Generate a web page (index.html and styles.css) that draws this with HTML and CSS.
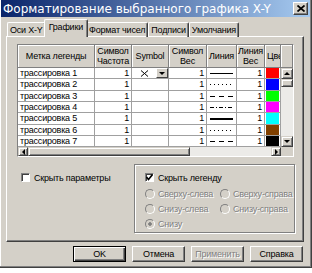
FILE: index.html
```html
<!DOCTYPE html>
<html lang="ru">
<head>
  <meta charset="UTF-8" />
  <title>Форматирование выбранного графика X-Y</title>
  <link rel="stylesheet" href="styles.css">
</head>
<body>
<div class="window">
  <div class="titlebar">
    <span class="title">Форматирование выбранного графика X-Y</span>
    <button class="close" aria-label="Закрыть">
      <svg width="8" height="7" viewBox="0 0 8 7"><path d="M0.5 0.5 L7.5 6.5 M7.5 0.5 L0.5 6.5" stroke="#000" stroke-width="1.7" /></svg>
    </button>
  </div>

  <div class="tabs">
    <div class="tab">Оси X-Y</div>
    <div class="tab active">Графики</div>
    <div class="tab">Формат чисел</div>
    <div class="tab">Подписи</div>
    <div class="tab">Умолчания</div>
  </div>

  <div class="panel">
    <div class="grid">
      <div class="hd">Метка легенды</div>
      <div class="hd">Символ<br>Частота</div>
      <div class="hd">Symbol</div>
      <div class="hd">Символ<br>Вес</div>
      <div class="hd">Линия</div>
      <div class="hd">Линия<br>Вес</div>
      <div class="hd hd-clip">Цвет</div>
      <div class="hd"></div>

      <div class="vscroll">
        <div class="sb-btn"><i class="arr up"></i></div>
        <div class="sb-thumb"></div>
        <div class="sb-track"></div>
        <div class="sb-btn"><i class="arr down"></i></div>
      </div>

      <!-- строка 1 -->
      <div class="c name">трассировка 1</div>
      <div class="c num">1</div>
      <div class="c sym">
        <span class="sym-val"><svg width="9" height="7" viewBox="0 0 9 7"><path d="M1 0.5 L8 6.5 M8 0.5 L1 6.5" stroke="#000" stroke-width="1" /></svg></span>
        <span class="drop"><i class="arr down"></i></span>
      </div>
      <div class="c num">1</div>
      <div class="c line"><i class="ln"></i></div>
      <div class="c num">1</div>
      <div class="c color"><i class="red"></i></div>

      <!-- строка 2 -->
      <div class="c name">трассировка 2</div>
      <div class="c num">1</div>
      <div class="c"></div>
      <div class="c num">1</div>
      <div class="c line"><i class="ln dot"></i></div>
      <div class="c num">1</div>
      <div class="c color"><i class="blue"></i></div>

      <!-- строка 3 -->
      <div class="c name">трассировка 3</div>
      <div class="c num">1</div>
      <div class="c"></div>
      <div class="c num">1</div>
      <div class="c line"><i class="ln dash"></i></div>
      <div class="c num">1</div>
      <div class="c color"><i class="green"></i></div>

      <!-- строка 4 -->
      <div class="c name">трассировка 4</div>
      <div class="c num">1</div>
      <div class="c"></div>
      <div class="c num">1</div>
      <div class="c line"><i class="ln dashdot"></i></div>
      <div class="c num">1</div>
      <div class="c color"><i class="magenta"></i></div>

      <!-- строка 5 -->
      <div class="c name">трассировка 5</div>
      <div class="c num">1</div>
      <div class="c"></div>
      <div class="c num">1</div>
      <div class="c line"><i class="ln thick"></i></div>
      <div class="c num">1</div>
      <div class="c color"><i class="cyan"></i></div>

      <!-- строка 6 -->
      <div class="c name">трассировка 6</div>
      <div class="c num">1</div>
      <div class="c"></div>
      <div class="c num">1</div>
      <div class="c line"><i class="ln dot"></i></div>
      <div class="c num">1</div>
      <div class="c color"><i class="brown"></i></div>

      <!-- строка 7 -->
      <div class="c name">трассировка 7</div>
      <div class="c num">1</div>
      <div class="c"></div>
      <div class="c num">1</div>
      <div class="c line"><i class="ln dash"></i></div>
      <div class="c num">1</div>
      <div class="c color"><i class="black"></i></div>

      <div class="hscroll">
        <div class="sb-btn"><i class="arr left"></i></div>
        <div class="sb-thumb h"></div>
        <div class="sb-track"></div>
        <div class="sb-btn"><i class="arr right"></i></div>
      </div>
      <div class="corner"></div>
    </div>

    <div class="options">
      <div class="opt-left">
        <label class="check"><span class="box"></span>Скрыть параметры</label>
      </div>
      <div class="group">
        <label class="check"><span class="box"><svg width="7" height="7" viewBox="0 0 7 7"><path d="M0.5 3 L2.5 5.5 L6.5 0.5" fill="none" stroke="#000" stroke-width="1.6" /></svg></span>Скрыть легенду</label>
        <div class="radios">
          <span class="radio">Сверху-слева</span>
          <span class="radio">Сверху-справа</span>
          <span class="radio">Снизу-слева</span>
          <span class="radio">Снизу-справа</span>
          <span class="radio on">Снизу</span>
        </div>
      </div>
    </div>
  </div>

  <div class="buttons">
    <button class="btn default">OK</button>
    <button class="btn">Отмена</button>
    <button class="btn" disabled>Применить</button>
    <button class="btn">Справка</button>
  </div>
</div>
</body>
</html>
```

FILE: styles.css
```css
* {
  box-sizing: border-box;
}

body {
  margin: 0;
  background: #fff;
  font-family: "Liberation Sans", Arial, sans-serif;
  font-size: 9px;
  letter-spacing: -0.2px;
  color: #000;
}

.window {
  width: 312px;
  height: 268px;
  padding: 0 2px 0 1px;
  background: #d4d0c8;
  box-shadow: inset -1px -1px #404040, inset -2px -2px #808080, inset 1px 1px #fff;
}

.titlebar {
  height: 17px;
  display: flex;
  align-items: center;
  justify-content: space-between;
  padding: 0 2px 0 2px;
  background: linear-gradient(to right, #0a246a, #a6caf0);
  color: #fff;
  font-family: "DejaVu Sans", sans-serif;
  font-size: 12px;
  letter-spacing: 0;
}

.close {
  width: 15px;
  height: 13px;
  padding: 0;
  display: flex;
  align-items: center;
  justify-content: center;
  background: #d4d0c8;
  border: 1px solid;
  border-color: #fff #404040 #404040 #fff;
  box-shadow: inset -1px -1px #808080;
}

/* вкладки */
.tabs {
  height: 20px;
  display: flex;
  align-items: flex-end;
  padding-left: 6px;
}
.tab {
  height: 15px;
  padding: 0 2px;
  line-height: 14px;
  white-space: nowrap;
  border: 1px solid;
  border-bottom: none;
  border-color: #fff #404040 #404040 #fff;
  border-radius: 2px 2px 0 0;
  box-shadow: inset -1px 0 #808080;
}
.tab.active {
  height: 18px;
  margin: 0 -2px;
  padding: 0 4px;
  position: relative;
  z-index: 1;
  background: #d4d0c8;
  line-height: 15px;
}

.panel {
  width: 298px;
  height: 206px;
  margin-left: 5px;
  margin-top: -1px;
  padding: 7px 0 0 10px;
  border: 1px solid;
  border-color: #fff #404040 #404040 #fff;
  box-shadow: inset -1px -1px #808080;
}

/* таблица */
.grid {
  width: 277px;
  display: grid;
  grid-template-columns: 77px 37px 37px 38px 30px 28px 16px 12px;
  grid-template-rows: 23px 11px 12px 11px 11px 12px 11px 11px 9px;
  border: 1px solid;
  border-color: #808080 #fff #fff #808080;
  background: #fff;
}
.hd {
  display: flex;
  align-items: center;
  justify-content: center;
  text-align: center;
  line-height: 10px;
  background: #d4d0c8;
  border-right: 1px solid #808080;
  border-bottom: 1px solid #808080;
  box-shadow: inset 1px 1px #fff;
  overflow: hidden;
}
.hd-clip {
  justify-content: flex-start;
  padding-left: 2px;
  white-space: nowrap;
}
.c {
  background: #fff;
  border-right: 1px solid #a0a0a0;
  border-bottom: 1px solid #a0a0a0;
  line-height: 10px;
  white-space: nowrap;
  overflow: hidden;
}
.name {
  padding-left: 2px;
}
.num {
  text-align: right;
  padding-right: 2px;
}
.sym {
  display: flex;
}
.sym-val {
  flex: 1;
  display: flex;
  align-items: center;
  justify-content: center;
}
.drop {
  width: 12px;
  display: flex;
  align-items: center;
  justify-content: center;
  background: #d4d0c8;
  border: 1px solid;
  border-color: #fff #404040 #404040 #fff;
}
.line {
  display: flex;
  align-items: center;
}
.ln {
  display: block;
  flex: 1;
  height: 1px;
  margin: 0 3px;
  background: #000;
}
.ln.thick {
  height: 2px;
}
.ln.dot {
  background: repeating-linear-gradient(to right, #000 0 1px, transparent 1px 4px);
}
.ln.dash {
  background: repeating-linear-gradient(to right, #000 0 5px, transparent 5px 9px);
}
.ln.dashdot {
  background: repeating-linear-gradient(to right, #000 0 4px, transparent 4px 6px, #000 6px 7px, transparent 7px 9px);
}
.color {
  padding: 0 1px 0 1px;
}
.color i {
  display: block;
  height: 100%;
}
.red { background: #ff0000; }
.blue { background: #0000ff; }
.green { background: #00ff00; }
.magenta { background: #ff00ff; }
.cyan { background: #00ffff; }
.brown { background: #804000; }
.black { background: #000; }

/* полосы прокрутки */
.vscroll {
  grid-column: 8;
  grid-row: 2 / 9;
  display: flex;
  flex-direction: column;
  background: #ecebe8;
}
.hscroll {
  grid-column: 1 / 8;
  display: flex;
  background: #ecebe8;
}
.corner {
  background: #d4d0c8;
}
.sb-btn,
.sb-thumb {
  flex: none;
  display: flex;
  align-items: center;
  justify-content: center;
  background: #d4d0c8;
  border: 1px solid;
  border-color: #d4d0c8 #404040 #404040 #d4d0c8;
  box-shadow: inset 1px 1px #fff, inset -1px -1px #808080;
}
.vscroll .sb-btn {
  height: 11px;
}
.vscroll .sb-thumb {
  height: 8px;
}
.hscroll .sb-btn {
  width: 10px;
}
.sb-thumb.h {
  width: 162px;
}
.sb-track {
  flex: 1;
}
.arr {
  display: block;
  width: 0;
  height: 0;
  border: 3px solid transparent;
}
.arr.up { border-bottom-color: #000; border-top-width: 0; }
.arr.down { border-top-color: #000; border-bottom-width: 0; }
.arr.left { border-right-color: #000; border-left-width: 0; }
.arr.right { border-left-color: #000; border-right-width: 0; }

/* параметры */
.options {
  display: flex;
  margin-top: 7px;
}
.opt-left {
  width: 117px;
  padding: 6px 0 0 4px;
}
.check {
  height: 15px;
  display: flex;
  align-items: center;
  white-space: nowrap;
}
.box {
  width: 9px;
  height: 9px;
  margin-right: 4px;
  display: flex;
  align-items: center;
  justify-content: center;
  background: #fff;
  border: 1px solid;
  border-color: #808080 #fff #fff #808080;
  box-shadow: inset 1px 1px #404040;
}
.group {
  width: 161px;
  height: 69px;
  padding: 5px 0 0 10px;
  border: 1px solid #808080;
  box-shadow: inset 1px 1px #fff, 1px 1px #fff;
}
.radios {
  display: grid;
  grid-template-columns: 75px auto;
  grid-auto-rows: 15px;
  margin-top: 1px;
}
.radio {
  display: flex;
  align-items: center;
  white-space: nowrap;
  color: #808080;
  text-shadow: 1px 1px #fff;
}
.radio::before {
  content: "";
  flex: none;
  width: 8px;
  height: 8px;
  margin-right: 3px;
  border-radius: 50%;
  border: 1px solid;
  border-color: #808080 #fff #fff #808080;
  background: #d4d0c8;
}
.radio.on::before {
  background: radial-gradient(circle, #808080 0 1.5px, #d4d0c8 2px);
}

/* кнопки */
.buttons {
  width: 298px;
  margin-left: 5px;
  margin-top: 4px;
  padding-right: 1px;
  display: flex;
  justify-content: flex-end;
  gap: 6px;
}
.btn {
  width: 53px;
  height: 16px;
  padding: 0;
  font: inherit;
  letter-spacing: inherit;
  color: #000;
  background: #d4d0c8;
  border: 1px solid;
  border-color: #fff #404040 #404040 #fff;
  box-shadow: inset -1px -1px #808080;
}
.btn.default {
  border-color: #000;
  box-shadow: inset 1px 1px #fff, inset -1px -1px #404040, inset -2px -2px #808080;
}
.btn:disabled {
  color: #808080;
  text-shadow: 1px 1px #fff;
}
```
